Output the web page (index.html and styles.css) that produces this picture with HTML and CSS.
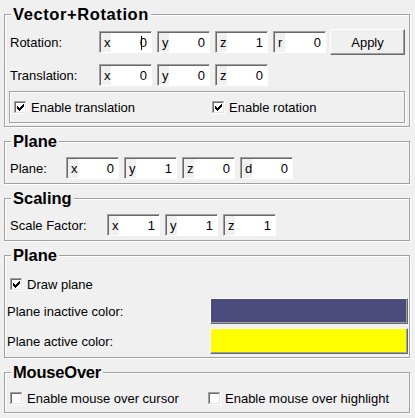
FILE: index.html
```html
<!DOCTYPE html>
<html>
<head>
<meta charset="utf-8">
<link rel="stylesheet" href="styles.css">
</head>
<body>
<fieldset class="group g1">
  <legend>Vector+Rotation</legend>
  <div class="row r1">
    <span class="lbl l1">Rotation:</span>
    <span class="vbox"><span class="k">x</span><span class="v"><span class="caret"></span>0</span></span>
    <span class="vbox"><span class="k">y</span><span class="v">0</span></span>
    <span class="vbox"><span class="k">z</span><span class="v">1</span></span>
    <span class="vbox"><span class="k">r</span><span class="v">0</span></span>
    <button class="btn apply">Apply</button>
  </div>
  <div class="row r2">
    <span class="lbl l1">Translation:</span>
    <span class="vbox"><span class="k">x</span><span class="v">0</span></span>
    <span class="vbox"><span class="k">y</span><span class="v">0</span></span>
    <span class="vbox"><span class="k">z</span><span class="v">0</span></span>
  </div>
  <div class="sub">
    <label class="chk first">
      <svg class="cb" viewBox="0 0 13 13" width="13" height="13" shape-rendering="crispEdges"><path fill="#a0a0a0" d="M0 0h12v1H1v11H0z"/><path fill="#fff" d="M12 0h1v13H0v-1h12z"/><path fill="#696969" d="M1 1h10v1H2v9H1z"/><path fill="#e3e3e3" d="M11 1h1v11H1v-1h10z"/><rect x="2" y="2" width="9" height="9" fill="#fff"/><path fill="#000" d="M9 3h1v1H9zM8 4h2v1H8zM3 5h1v1H3zM7 5h3v1H7zM3 6h2v1H3zM6 6h3v1H6zM3 7h5v1H3zM4 8h3v1H4zM5 9h1v1H5z"/></svg>
      <span class="ct">Enable translation</span>
    </label>
    <label class="chk">
      <svg class="cb" viewBox="0 0 13 13" width="13" height="13" shape-rendering="crispEdges"><path fill="#a0a0a0" d="M0 0h12v1H1v11H0z"/><path fill="#fff" d="M12 0h1v13H0v-1h12z"/><path fill="#696969" d="M1 1h10v1H2v9H1z"/><path fill="#e3e3e3" d="M11 1h1v11H1v-1h10z"/><rect x="2" y="2" width="9" height="9" fill="#fff"/><path fill="#000" d="M9 3h1v1H9zM8 4h2v1H8zM3 5h1v1H3zM7 5h3v1H7zM3 6h2v1H3zM6 6h3v1H6zM3 7h5v1H3zM4 8h3v1H4zM5 9h1v1H5z"/></svg>
      <span class="ct">Enable rotation</span>
    </label>
  </div>
</fieldset>

<fieldset class="group g2">
  <legend>Plane</legend>
  <div class="row">
    <span class="lbl l2">Plane:</span>
    <span class="vbox"><span class="k">x</span><span class="v">0</span></span>
    <span class="vbox"><span class="k">y</span><span class="v">1</span></span>
    <span class="vbox"><span class="k">z</span><span class="v">0</span></span>
    <span class="vbox"><span class="k">d</span><span class="v">0</span></span>
  </div>
</fieldset>

<fieldset class="group g3">
  <legend>Scaling</legend>
  <div class="row">
    <span class="lbl l3">Scale Factor:</span>
    <span class="vbox"><span class="k">x</span><span class="v">1</span></span>
    <span class="vbox"><span class="k">y</span><span class="v">1</span></span>
    <span class="vbox"><span class="k">z</span><span class="v">1</span></span>
  </div>
</fieldset>

<fieldset class="group g4">
  <legend>Plane</legend>
  <div class="chkrow">
    <label class="chk">
      <svg class="cb" viewBox="0 0 13 13" width="13" height="13" shape-rendering="crispEdges"><path fill="#a0a0a0" d="M0 0h12v1H1v11H0z"/><path fill="#fff" d="M12 0h1v13H0v-1h12z"/><path fill="#696969" d="M1 1h10v1H2v9H1z"/><path fill="#e3e3e3" d="M11 1h1v11H1v-1h10z"/><rect x="2" y="2" width="9" height="9" fill="#fff"/><path fill="#000" d="M9 3h1v1H9zM8 4h2v1H8zM3 5h1v1H3zM7 5h3v1H7zM3 6h2v1H3zM6 6h3v1H6zM3 7h5v1H3zM4 8h3v1H4zM5 9h1v1H5z"/></svg>
      <span class="ct">Draw plane</span>
    </label>
  </div>
  <div class="colrow">
    <span class="lbl">Plane inactive color:</span>
    <button class="btn swatch inactive"></button>
  </div>
  <div class="colrow">
    <span class="lbl">Plane active color:</span>
    <button class="btn swatch active"></button>
  </div>
</fieldset>

<fieldset class="group g5">
  <legend>MouseOver</legend>
  <div class="chkrow">
    <label class="chk first">
      <svg class="cb" viewBox="0 0 13 13" width="13" height="13" shape-rendering="crispEdges"><path fill="#a0a0a0" d="M0 0h12v1H1v11H0z"/><path fill="#fff" d="M12 0h1v13H0v-1h12z"/><path fill="#696969" d="M1 1h10v1H2v9H1z"/><path fill="#e3e3e3" d="M11 1h1v11H1v-1h10z"/><rect x="2" y="2" width="9" height="9" fill="#fff"/></svg>
      <span class="ct">Enable mouse over cursor</span>
    </label>
    <label class="chk">
      <svg class="cb" viewBox="0 0 13 13" width="13" height="13" shape-rendering="crispEdges"><path fill="#a0a0a0" d="M0 0h12v1H1v11H0z"/><path fill="#fff" d="M12 0h1v13H0v-1h12z"/><path fill="#696969" d="M1 1h10v1H2v9H1z"/><path fill="#e3e3e3" d="M11 1h1v11H1v-1h10z"/><rect x="2" y="2" width="9" height="9" fill="#fff"/></svg>
      <span class="ct">Enable mouse over highlight</span>
    </label>
  </div>
</fieldset>
</body>
</html>
```

FILE: styles.css
```css
* { box-sizing: border-box; }
html, body { margin: 0; background: #f0f0f0; }
body {
  padding-top: 5px;
  width: 415px;
  height: 418px;
  overflow: hidden;
  font: 13px/15px "Liberation Sans", Arial, sans-serif;
  color: #000;
}
.group {
  margin: 0 5px 0 4px;
  padding: 0 5px 4px 5px;
  border: 1px solid #a0a0a0;
  box-shadow: inset 1px 1px 0 #fff, 1px 1px 0 #fff;
  min-width: 0;
}
.group + .group { margin-top: 5px; }
.group legend {
  font-weight: bold;
  font-size: 16.5px;
  line-height: 18px;
  padding: 0 2px;
  margin-left: 1px;
  background: #f0f0f0;
}
.g1 legend { letter-spacing: 0.6px; }
.g5 legend { letter-spacing: -0.2px; }
.g1 { padding-bottom: 3px; }
.g4 { padding-bottom: 3px; }
.g5 { padding-bottom: 7px; }

.row { display: flex; align-items: center; height: 22px; }
.g1 .r1 { margin-top: 8px; }
.g1 .r2 { margin-top: 11px; }
.g2 .row, .g3 .row { margin-top: 7px; }

.lbl { flex: none; white-space: nowrap; }
.l1 { width: 89px; }
.l2 { width: 56px; }
.l3 { width: 97px; }

.vbox {
  flex: none;
  width: 53px;
  height: 22px;
  display: flex;
  border: 1px solid;
  border-color: #a0a0a0 #fff #fff #a0a0a0;
  background: #fff;
}
.vbox + .vbox { margin-left: 5px; }
.k {
  width: 11px;
  background: #f0f0f0;
  border-top: 1px solid #696969;
  border-left: 1px solid #696969;
  padding-left: 3px;
  line-height: 19px;
}
.v {
  flex: 1;
  text-align: right;
  border-top: 1px solid #696969;
  padding-right: 4px;
  line-height: 19px;
}
.caret {
  display: inline-block;
  width: 1px;
  height: 14px;
  background: #000;
  vertical-align: -3px;
  margin-right: -2px;
}

.btn {
  font: inherit;
  color: #000;
  padding: 0;
  margin: 0;
  border: 1px solid;
  border-color: #fff #696969 #696969 #fff;
  box-shadow: inset -1px -1px 0 #a0a0a0;
  background: #f0f0f0;
}
.apply {
  flex: none;
  width: 75px;
  height: 26px;
  margin-left: 4px;
}

.sub {
  margin: 5px -1px 0 -1px;
  height: 32px;
  border: 1px solid #a0a0a0;
  box-shadow: inset 1px 1px 0 #fff, 1px 1px 0 #fff;
  display: flex;
  align-items: center;
  padding-left: 4px;
}
.chk { display: flex; align-items: center; flex: none; }
.chk.first { width: 198px; }
.cb { display: block; flex: none; }
.ct { margin-left: 4px; white-space: nowrap; }

.chkrow { display: flex; align-items: center; height: 13px; }
.g4 .chkrow { margin-top: 14px; }
.g5 .chkrow { margin-top: 11px; }

.colrow {
  display: flex;
  align-items: center;
  margin: 7px -4px 0 -3px;
}
.colrow + .colrow { margin-top: 4px; }
.colrow .lbl { flex: 1; }
.swatch { flex: none; width: 198px; height: 26px; }
.inactive { background: #4b4c7d; }
.active { background: #ffff00; }
```
